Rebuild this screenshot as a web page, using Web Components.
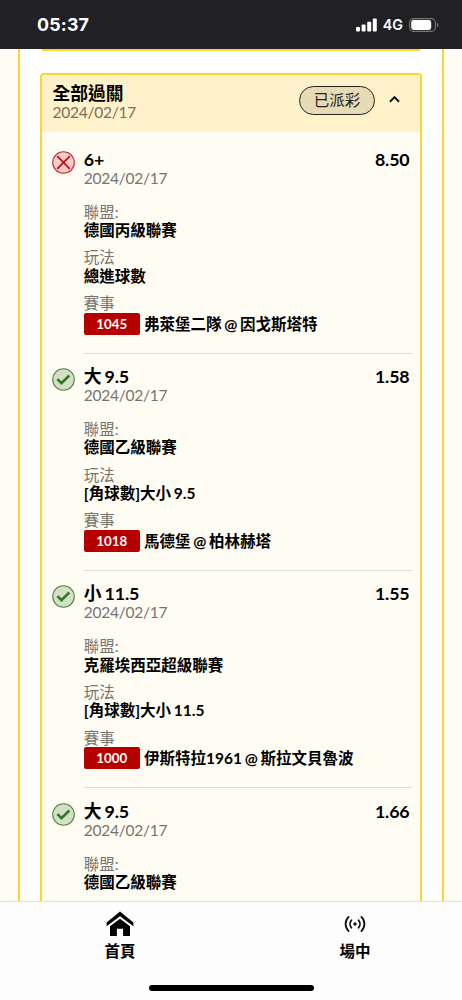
<!DOCTYPE html>
<html lang="zh-Hant">
<head>
<meta charset="utf-8">
<title>過關注單</title>
<style>
html,body{margin:0;height:100%;overflow:hidden;background:#fffcf4}
body{font-family:Lato,"Noto Sans CJK TC",sans-serif;color:#000}
</style>
</head>
<body>
<bet-app></bet-app>
<script>
function define(name, html, setup) {
  const t = document.createElement('template');
  t.innerHTML = html;
  customElements.define(name, class extends HTMLElement {
    constructor() {
      super();
      this.attachShadow({mode: 'open'}).appendChild(t.content.cloneNode(true));
    }
    connectedCallback() { if (setup) setup(this, this.shadowRoot); }
  });
}

define('status-bar', `
<style>
:host{display:flex;align-items:center;justify-content:space-between;height:49px;box-sizing:border-box;background:#202025;color:#fff;padding:1px 23px 0 37px;font-family:Inter,sans-serif}
.time{font-size:17.8px;font-weight:700;line-height:20px;letter-spacing:.2px}
.right{display:flex;align-items:center}
.net{font-size:14.3px;font-weight:600;line-height:18px;margin:0 6px 0 5px}
svg{display:block}
</style>
<span class="time">05:37</span>
<div class="right">
<svg width="22" height="14" viewBox="0 0 22 14" fill="#fff"><rect x="0" y="9" width="4" height="4.5" rx="1"/><rect x="5.6" y="6.6" width="4" height="6.9" rx="1"/><rect x="11.2" y="3.8" width="4" height="9.7" rx="1"/><rect x="16.8" y=".6" width="4" height="12.9" rx="1"/></svg>
<span class="net">4G</span>
<svg width="30" height="14" viewBox="0 0 30 14"><rect x=".6" y=".6" width="25.8" height="12.8" rx="4" fill="none" stroke="#77777b" stroke-width="1.1"/><rect x="2.2" y="2.1" width="20" height="9.8" rx="2.4" fill="#fff"/><path d="M28 4.8c1.8.6 1.8 3.8 0 4.4z" fill="#77777b"/></svg>
</div>`);

define('result-icon', `
<style>:host{display:block;width:23px;height:23px}svg{display:none}:host([kind=win]) .w,:host([kind=lose]) .l{display:block}</style>
<svg class="w" width="23" height="23" viewBox="0 0 23 23"><circle cx="11.5" cy="11.5" r="10.8" fill="#d5dfc8" stroke="#4a8c40" stroke-width="1.1"/><path d="M5.4 11.1l4.1 4 7.8-7.6" fill="none" stroke="#2f7a20" stroke-width="2.6"/></svg>
<svg class="l" width="23" height="23" viewBox="0 0 23 23"><circle cx="11.5" cy="11.5" r="10.8" fill="#f6cdc9" stroke="#c22b30" stroke-width="1.1"/><path d="M5.2 5.2l12.6 12.6M17.8 5.2L5.2 17.8" fill="none" stroke="#bd1016" stroke-width="1.7"/></svg>`);

define('code-badge', `
<style>:host{display:block;width:56px;height:22px;line-height:22px;border-radius:2px;background:#b60000;color:#fff;text-align:center;font-size:13.3px;font-weight:700}</style><slot></slot>`);

define('bet-leg', `
<style>
:host{display:grid;grid-template-columns:31.6px 1fr;height:217.3px;padding:0 8px 0 10.2px;box-sizing:border-box}
result-icon{margin-top:14.6px}
.body{border-bottom:1.3px solid #dfddd6;box-sizing:border-box;padding-top:13.4px;min-width:0;word-spacing:-1px}
.head{display:flex;justify-content:space-between;height:19px;line-height:19px;font-size:17.8px;font-weight:700;padding-right:2.5px;letter-spacing:-.15px}
.date,.label{font-size:15.5px;height:18px;line-height:18px;color:#77746f;font-weight:400}
.date{margin-bottom:16px;letter-spacing:-.25px}
.value{font-size:15.5px;font-weight:700;height:19px;line-height:19px;margin-bottom:8.3px;padding-top:.4px}
.match{display:flex;align-items:center;gap:4.2px;margin-top:.8px;font-size:15.5px;font-weight:700;height:22px;line-height:22px;white-space:nowrap}
</style>
<result-icon></result-icon>
<div class="body">
<div class="head"><span class="pick"></span><span class="odds"></span></div>
<div class="date">2024/02/17</div>
<div class="label">聯盟:</div><div class="value league"></div>
<div class="rest">
<div class="label">玩法</div><div class="value market"></div>
<div class="label">賽事</div>
<div class="match"><code-badge></code-badge><slot></slot></div>
</div>
</div>`, (el, r) => {
  r.querySelector('result-icon').setAttribute('kind', el.getAttribute('result'));
  for (const k of ['pick', 'odds', 'league', 'market']) r.querySelector('.' + k).textContent = el.getAttribute(k);
  if (el.hasAttribute('code')) r.querySelector('code-badge').textContent = el.getAttribute('code');
  else r.querySelector('.rest').remove();
});

define('bet-card', `
<style>
:host{display:block;box-sizing:border-box;border:2.2px solid #ffd42e;border-radius:4px;background:#fffcf4;overflow:hidden}
header{display:flex;align-items:center;background:#fff1c9;height:57px;padding:0 20px 0 10.5px}
.t{flex:1;margin-top:-2px}
.title{font-size:17.8px;line-height:19px;height:19px;font-weight:700}
.date{font-size:15.5px;line-height:18px;height:18px;color:#77705c;letter-spacing:-.25px}
.pill{box-sizing:border-box;width:76px;height:29px;line-height:27px;border:1.2px solid #222;border-radius:15px;background:#e6dbb5;text-align:center;font-size:15.5px;color:#222;margin:-5px 14px 0 0}
svg{display:block;margin-top:-8px}
.legs{padding-top:4.5px}
</style>
<header><div class="t"><div class="title">全部過關</div><div class="date">2024/02/17</div></div>
<div class="pill">已派彩</div>
<svg width="11" height="8" viewBox="0 0 11 8"><path d="M1 6.7l4.5-4.6L10 6.7" fill="none" stroke="#111" stroke-width="2"/></svg></header>
<div class="legs"><slot></slot></div>`);

define('tab-item', `
<style>:host{display:flex;flex-direction:column;align-items:center;font-size:15.5px;font-weight:700;line-height:20px}
.icon{height:33px;display:flex;align-items:center;margin:5px 0 1px}</style>
<div class="icon"><slot name="icon"></slot></div><span><slot></slot></span>`);

define('tab-bar', `
<style>
:host{display:flex;flex-direction:column;justify-content:space-between;align-items:center;height:99px;box-sizing:border-box;border-top:1px solid #e3e2df;background:#fdfdfd;padding-bottom:9px}
nav{display:grid;grid-template-columns:240px 222px}
tab-item+tab-item{padding-left:8px}
i{width:165px;height:6px;border-radius:3px;background:#000}
svg{display:block}
</style>
<nav>
<tab-item><svg slot="icon" width="28" height="26" viewBox="0 0 28 26"><path d="M14 .6L.6 11.4v3.8L14 5.2l13.4 10v-3.8z"/><path d="M14 7.7L4 15.2V25h6.9v-7.2h6.2V25H24v-9.8z"/></svg>首頁</tab-item>
<tab-item><svg slot="icon" width="22" height="18" viewBox="0 0 22 18" fill="none" stroke="#111" stroke-width="1.8" stroke-linecap="round"><circle cx="11" cy="9" r="1.7" fill="#111" stroke="none"/><path d="M7.4 5.3c-1.8 2.1-1.8 5.3 0 7.4M14.6 5.3c1.8 2.1 1.8 5.3 0 7.4M4.6 1.9c-4 4-4 10.2 0 14.2M17.4 1.9c4 4 4 10.2 0 14.2"/></svg>場中</tab-item>
</nav><i></i>`);

define('bet-app', `
<style>
:host{display:grid;grid-template:49px minmax(0,1fr) 99px / 462px;height:1000px;width:462px;overflow:hidden}
main{overflow:hidden;padding:0 18px}
.panel{box-sizing:border-box;height:100%;overflow:hidden;border:solid #ffd42e;border-width:0 2px;background:#fff;padding:0 20px}
.prev{height:2px;box-sizing:border-box;border-bottom:2px solid #ffd42e;margin:0 2px 21.8px}
</style>
<status-bar></status-bar>
<main><div class="panel"><div class="prev"></div>
<bet-card>
<bet-leg result="lose" pick="6+" odds="8.50" league="德國丙級聯賽" market="總進球數" code="1045">弗萊堡二隊 @ 因戈斯塔特</bet-leg>
<bet-leg result="win" pick="大 9.5" odds="1.58" league="德國乙級聯賽" market="[角球數]大小 9.5" code="1018">馬德堡 @ 柏林赫塔</bet-leg>
<bet-leg result="win" pick="小 11.5" odds="1.55" league="克羅埃西亞超級聯賽" market="[角球數]大小 11.5" code="1000">伊斯特拉1961 @ 斯拉文貝魯波</bet-leg>
<bet-leg result="win" pick="大 9.5" odds="1.66" league="德國乙級聯賽"></bet-leg>
</bet-card></div></main>
<tab-bar></tab-bar>`);
</script>
</body>
</html>
